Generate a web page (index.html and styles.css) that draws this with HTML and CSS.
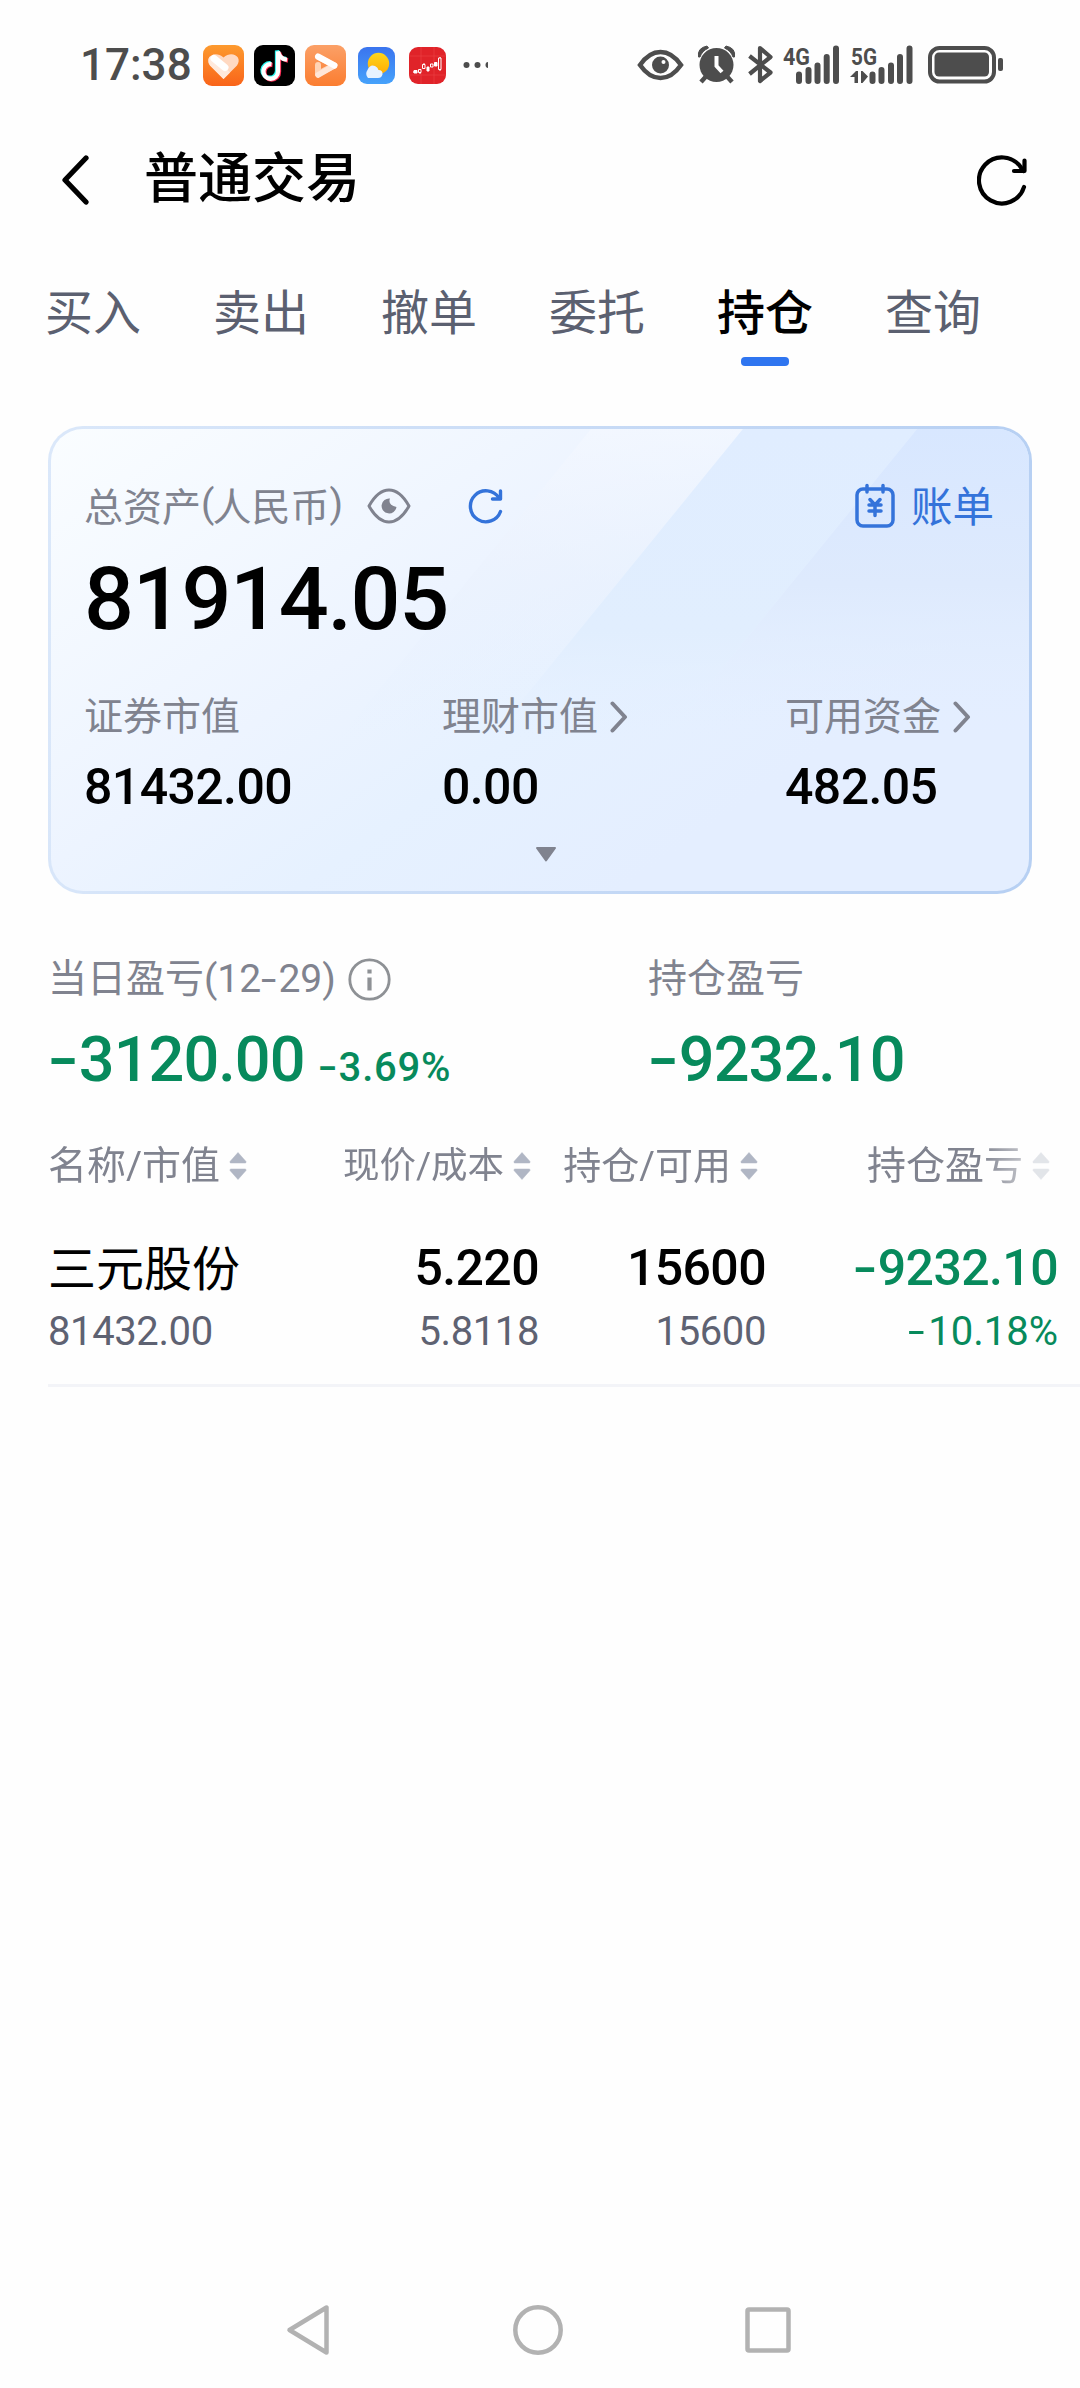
FILE: index.html
```html
<!DOCTYPE html>
<html lang="zh-CN">
<head>
<meta charset="utf-8">
<title>普通交易</title>
<link rel="stylesheet" href="styles.css">
</head>
<body>
<svg width="0" height="0" class="defs">
  <defs>
    <symbol id="sort" viewBox="0 0 18 30"><path d="M9 1.500 17 10.500Q17.500 12 16 12H2Q.500 12 1 10.500ZM9 28.500 17 19.500Q17.500 18 16 18H2Q.500 18 1 19.500Z" fill="#b0b6c4" stroke="#b0b6c4" stroke-width=".5"/></symbol>
    <symbol id="more" viewBox="0 0 18 32"><path d="M2.500 2.500 15 16 2.500 29.500" fill="none" stroke="#80838f" stroke-width="4" stroke-linecap="round" stroke-linejoin="round"/></symbol>
  </defs>
</svg>

<div class="status">
  <span class="time">17:38</span>
  <div class="apps">
    <svg width="41" height="41" viewBox="0 0 41 41"><defs><linearGradient id="g1" x2="0" y2="1"><stop stop-color="#fd9a2e"/><stop offset="1" stop-color="#f9641a"/></linearGradient></defs><rect width="41" height="41" rx="9" fill="url(#g1)"/><path d="M20.500 34 7 20.500C1 12 12 5 20.500 12.500C29 5 40 12 34 20.500Z" fill="#ffd9c2"/><path d="M20.500 34 27 27.500 12 12.500Q7 9 5.500 14Q5 18 7 20.500Z" fill="#ffe9dc"/><path d="M11 13.500 22 22.500" stroke="#fff" stroke-width="7" stroke-linecap="round"/></svg>
    <svg width="41" height="41" viewBox="0 0 41 41"><rect width="41" height="41" rx="9"/><g fill="none" stroke-width="4.300"><path d="M16.500 18.200A7.300 7.300 0 1 0 23 26V5.500Q24.500 13.500 32 14" stroke="#25f4ee"/><path d="M18.500 20A7.300 7.300 0 1 0 25 27V7.500Q27 14.500 34 15.500" stroke="#fe2c55"/><path d="M17.500 19.200A7.300 7.300 0 1 0 24 26.500V6.500Q25.700 14 33 14.700" stroke="#fff"/></g></svg>
    <svg width="41" height="41" viewBox="0 0 41 41"><defs><linearGradient id="g2" x2="0" y2="1"><stop stop-color="#fba067"/><stop offset="1" stop-color="#fb7d30"/></linearGradient></defs><rect width="41" height="41" rx="9" fill="url(#g2)"/><g fill="none" stroke-linecap="round" stroke-linejoin="round"><path d="M13 20V29L29 20.500" stroke="#ffd3b5" stroke-width="6"/><path d="M13 12 29.500 20.500 13 30" stroke="#ffe6d8" stroke-width="5.500"/><path d="M13 11.500 29.500 20.500" stroke="#fff" stroke-width="6"/></g></svg>
    <svg class="small first" width="37" height="37" viewBox="0 0 37 37"><defs><linearGradient id="g3" x2="0" y2="1"><stop stop-color="#3a74ee"/><stop offset="1" stop-color="#46a2fb"/></linearGradient><linearGradient id="g4" x2="0" y2="1"><stop stop-color="#fdd61a"/><stop offset="1" stop-color="#ffac04"/></linearGradient></defs><rect width="37" height="37" rx="9" fill="url(#g3)"/><circle cx="20.500" cy="16.500" r="10.700" fill="url(#g4)"/><path d="M10 31a6 6 0 0 1-.5-8Q12 17 17 19q3 1.500 3.500 4Q25 23 24.500 27.500Q23.500 31 20 31Z" fill="#e6f2ff"/></svg>
    <svg class="small" width="37" height="37" viewBox="0 0 37 37"><rect width="37" height="37" rx="9" fill="#e02329"/><path d="M0 9H37M0 28H37M12 0V37M25 0V37" stroke="#ec4548" stroke-width=".6"/><g stroke="#fff" fill="none"><path d="M4 25H7M11 22V27M15 16V21M23 17V20M31 10V24"/><path d="M5 23.500H8V26H5ZM25.500 15.500H28V19H25.500ZM18 20H20V24H18Z" fill="#fff"/><path d="M9.500 22.500H12V25.500H9.500ZM13.500 17.500H16V21.500H13.500ZM21.500 17H24V20H21.500ZM29.500 11H32V22.500H29.500Z" fill="#e02329"/></g></svg>
    <svg class="dots" width="25" height="8" viewBox="0 0 25 8" fill="#4d4d4d"><circle cx="3.500" cy="4" r="3"/><circle cx="14.500" cy="4" r="3"/><circle cx="25.500" cy="4" r="3"/></svg>
  </div>
  <svg class="signals" width="370" height="44" viewBox="636 43 370 44" fill="#4d4d4d">
    <g fill="none" stroke="#4d4d4d"><path d="M640 65Q649 52 660.500 52T681 65Q672 78 660.500 78T640 65Z" stroke-width="4.500"/></g>
    <circle cx="660.500" cy="65" r="8.500"/><circle cx="663.500" cy="62" r="2" fill="#fff"/>
    <circle cx="716.500" cy="65" r="17"/><path d="M716.500 56V66L722 72" fill="none" stroke="#fff" stroke-width="4"/><path d="M705.500 77 701 82M727.500 77 732 82" stroke="#4d4d4d" stroke-width="4.500"/><path d="M698.500 57Q697 48 707 46L708.500 48Q702 51 700 57ZM734.500 57Q736 48 726 46L724.500 48Q731 51 733 57Z" stroke="#4d4d4d"/>
    <path d="M749.500 56 770.500 72.500 760 81V48L770.500 57 749.500 74" fill="none" stroke="#4d4d4d" stroke-width="4.200" stroke-linejoin="round"/>
    <path d="M799 74.500V81M808.500 70V81M817.500 65.500V81M826.700 57V81M836 48.500V81" stroke="#4d4d4d" stroke-width="6" stroke-linecap="round"/>
    <path d="M872.500 74.500V81M881.500 70V81M891 65.500V81M900 57V81M909.500 48.500V81" stroke="#4d4d4d" stroke-width="6" stroke-linecap="round"/>
    <path d="M850 77 856 71H858V83H854.500V77ZM861 71H862.500L868 76.500 862.500 83H861Z"/>
    <text x="783" y="64.500" textLength="27" lengthAdjust="spacingAndGlyphs" class="net">4G</text>
    <text x="851" y="64.500" textLength="26" lengthAdjust="spacingAndGlyphs" class="net">5G</text>
    <rect x="930" y="48" width="64" height="33.500" rx="9.500" fill="none" stroke="#4d4d4d" stroke-width="4"/><rect x="934.500" y="52.500" width="54.500" height="24" rx="4.500"/><rect x="998" y="58" width="5" height="13" rx="2"/>
  </svg>
</div>

<header class="header">
  <svg width="30" height="50" viewBox="0 0 30 50"><path d="M26 3 5 25 26 47" fill="none" stroke="#000" stroke-width="5.200" stroke-linecap="round" stroke-linejoin="round"/></svg>
  <h1>普通交易</h1>
  <svg class="reload" width="50" height="52" viewBox="0 0 50 52" fill="none" stroke="#000" stroke-width="4.200" stroke-linecap="round" stroke-linejoin="round"><path d="M47 33A23 23 0 1 1 44 13.500L46.500 17"/><path d="M47.500 6.500V17H37"/></svg>
</header>

<nav class="tabs">
  <a>买入</a><a>卖出</a><a>撤单</a><a>委托</a><a class="active">持仓</a><a>查询</a>
</nav>

<section class="card">
  <svg class="stripes" width="978" height="462" viewBox="51 429 978 462">
    <defs>
      <linearGradient id="s1" x2="0" y2="1"><stop stop-color="#f4f8ff" stop-opacity=".7"/><stop offset=".5" stop-color="#eaf1fd" stop-opacity=".5"/><stop offset="1" stop-color="#e4f0ff" stop-opacity="0"/></linearGradient>
      <linearGradient id="s2" x2="0" y2="1"><stop stop-color="#e0edff"/><stop offset=".65" stop-color="#e1eefe"/><stop offset="1" stop-color="#e4efff" stop-opacity="0"/></linearGradient>
      <linearGradient id="s3" x2="0" y2="1"><stop stop-color="#d8e7ff"/><stop offset=".5" stop-color="#deeafd"/><stop offset="1" stop-color="#e4efff" stop-opacity="0"/></linearGradient>
    </defs>
    <path d="M591 429H743L490 740H338Z" fill="url(#s1)"/>
    <path d="M743 429H917L664 740H490Z" fill="url(#s2)"/>
    <path d="M917 429H1029V740H664Z" fill="url(#s3)"/>
  </svg>
  <div class="card-head">
    <span class="label">总资产<i class="paren">(</i>人民币<i class="paren">)</i></span>
    <svg class="eye" width="44" height="36" viewBox="0 0 44 36"><path d="M2 18Q11 2 22 2T42 18Q33 34 22 34T2 18Z" fill="none" stroke="#80838f" stroke-width="3" stroke-linejoin="round"/><path d="M23 10.500Q20.500 17 29.500 19A7.500 7.500 0 1 1 23 10.500Z" fill="#80838f"/></svg>
    <svg class="mini" width="35" height="36" viewBox="0 0 35 36" fill="none" stroke="#3473da" stroke-width="3.400" stroke-linecap="round" stroke-linejoin="round"><path d="M32.500 23.500A15.500 15.500 0 1 1 31 10"/><path d="M32.500 3V11H24.500"/></svg>
    <a class="bill"><svg width="40" height="46" viewBox="0 0 40 46" fill="none" stroke="#3473da" stroke-width="3.500" stroke-linecap="round"><rect x="2" y="6" width="36" height="37" rx="6"/><path d="M12 2.500V9M28 2.500V9"/><path d="M15 16.500 20 22 25 16.500M14 22H26M14 28H26M20 22V32.500"/></svg><span>账单</span></a>
  </div>
  <div class="total">81914.05</div>
  <div class="assets">
    <div><span class="label">证券市值</span><b>81432.00</b></div>
    <div><span class="label">理财市值<svg width="18" height="32"><use href="#more"/></svg></span><b>0.00</b></div>
    <div><span class="label">可用资金<svg width="18" height="32"><use href="#more"/></svg></span><b>482.05</b></div>
  </div>
  <svg class="expand" width="22" height="15" viewBox="0 0 22 15"><path d="M2 1H20L11 13.500Z" fill="#80838f" stroke="#80838f" stroke-width="2" stroke-linejoin="round"/></svg>
</section>

<section class="pnl">
  <div>
    <div class="label"><span>当日盈亏(12<i class="dash">-</i>29)</span><svg width="43" height="43" viewBox="0 0 43 43"><circle cx="21.500" cy="21.500" r="19.700" fill="none" stroke="#8e9195" stroke-width="2.800"/><path d="M21.500 11.500V15.500M21.500 19.500V32.500" stroke="#8e9195" stroke-width="4.200"/></svg></div>
    <div class="amount"><span><i class="dash">-</i>3120.00</span><small><i class="dash">-</i>3.69%</small></div>
  </div>
  <div>
    <div class="label"><span>持仓盈亏</span></div>
    <div class="amount"><span><i class="dash">-</i>9232.10</span></div>
  </div>
</section>

<section class="table">
  <div class="grid head">
    <span>名称/市值<svg width="18" height="30"><use href="#sort"/></svg></span>
    <span class="h2">现价/成本<svg width="18" height="30"><use href="#sort"/></svg></span>
    <span class="h3">持仓/可用<svg width="18" height="30"><use href="#sort"/></svg></span>
    <span>持仓盈亏<svg width="18" height="30"><use href="#sort"/></svg></span>
  </div>
  <div class="grid row">
    <div><b class="name">三元股份</b><span>81432.00</span></div>
    <div><b>5.220</b><span>5.8118</span></div>
    <div><b>15600</b><span>15600</span></div>
    <div class="down"><b><i class="dash">-</i>9232.10</b><span><i class="dash">-</i>10.18%</span></div>
  </div>
</section>

<footer class="sysnav">
  <svg width="44" height="52" viewBox="0 0 44 52"><path d="M40.500 3.500V48.500L3.500 26Z"/></svg>
  <svg width="50" height="52" viewBox="0 0 50 52"><circle cx="25" cy="26" r="22.700"/></svg>
  <svg width="46" height="46" viewBox="0 0 46 46"><rect x="2.500" y="2.500" width="41" height="41" rx="1.500"/></svg>
</footer>
</body>
</html>
```
FILE: styles.css
```css
* { box-sizing: border-box; }
body {
  margin: 0;
  width: 1080px;
  height: 2388px;
  overflow: hidden;
  display: flex;
  flex-direction: column;
  background: #fefefe;
  color: #000;
  font-family: Roboto, "Noto Sans CJK SC", sans-serif;
}
svg { display: block; flex: none; }
.defs { position: absolute; }
b { font-weight: 500; letter-spacing: -.012em; }
i { font-style: normal; }
.dash { display: inline-block; line-height: 1; margin-right: .165em; transform: translateY(-.01em) scaleX(1.42); transform-origin: left; }
.paren { letter-spacing: -.05em; }

.status {
  height: 130px;
  padding: 0 74px 0 80px;
  display: flex;
  align-items: center;
  flex: none;
}
.time { width: 123px; font-size: 44px; font-weight: 500; color: #4d4d4d; }
.apps { display: flex; align-items: center; gap: 10px; }
.apps .small { margin-right: 4px; }
.apps .first { margin-left: 2px; }
.apps .dots { margin-left: 3px; }
.signals { margin-left: auto; }
.net { font-size: 24px; font-weight: 700; }

.header { height: 100px; padding: 0 53px 0 60px; display: flex; align-items: center; flex: none; }
.header h1 { margin: 0 0 0 54px; font-size: 54px; line-height: 80px; font-weight: 500; }
.reload { margin-left: auto; }

.tabs { margin: 54px 0 0 45px; display: flex; gap: 72px; font-size: 48px; line-height: 60px; color: #5b6070; }
.tabs a { display: flex; flex-direction: column; align-items: center; }
.tabs a::after { content: ""; width: 48px; height: 9px; margin-top: 13px; border-radius: 4px; }
.tabs .active { color: #000; font-weight: 500; }
.tabs .active::after { background: #2f75f0; }

.card {
  position: relative;
  height: 468px;
  margin: 60px 48px 0;
  padding: 45px 35px 0 33px;
  flex: none;
  overflow: hidden;
  border: 3px solid transparent;
  border-radius: 35px;
  background:
    linear-gradient(145deg, #fafdff 0%, #edf4ff 38%, #e6f1ff 55%, #e4eeff 75%) padding-box,
    linear-gradient(100deg, #dbe8fa 0%, #c8dbf6 50%, #b7d0f3 90%) border-box;
}
.stripes { position: absolute; left: 0; top: 0; }
.card > :not(.stripes) { position: relative; }
.label { font-size: 39px; color: #80838f; display: flex; align-items: center; white-space: nowrap; }
.card-head { height: 60px; display: flex; align-items: center; }
.card-head svg { margin-top: 3px; }
.card-head .eye { margin-left: 26px; }
.card-head .mini { margin-left: 57px; }
.bill { margin-left: auto; display: flex; align-items: center; gap: 16px; font-size: 41.500px; color: #3473da; }
.total { margin-top: 20px; font-size: 88px; line-height: 90px; font-weight: 500; letter-spacing: -.015em; }
.assets { margin-top: 48px; display: grid; grid-template-columns: 358px 343px 1fr; }
.assets .label { line-height: 50px; }
.assets .label svg { margin-left: 12px; }
.assets b { display: block; margin-top: 15px; font-size: 50px; line-height: 60px; }
.expand { margin: 30px auto 0 451px; }

.pnl { margin: 55px 0 0 48px; display: grid; grid-template-columns: 600px 1fr; }
.pnl .label { height: 60px; line-height: 50px; }
.pnl .label svg { margin-left: 12px; }
.amount { margin-top: 11px; height: 80px; display: flex; align-items: baseline; font-size: 63px; line-height: 80px; font-weight: 500; letter-spacing: -.015em; color: #078a5c; white-space: nowrap; }
.amount small { margin-left: 13px; font-size: 40px; letter-spacing: .02em; }

.table { margin-top: 41px; }
.grid { display: grid; grid-template-columns: 250px 241px 227px 292px; padding-left: 48px; }
.head { height: 50px; font-size: 39px; line-height: 46px; color: #80838f; -webkit-mask-image: linear-gradient(90deg, #000 980px, rgba(0,0,0,.35) 1035px); mask-image: linear-gradient(90deg, #000 980px, rgba(0,0,0,.35) 1035px); }
.head > span { display: flex; align-items: center; justify-content: flex-end; padding-right: 8px; white-space: nowrap; }
.head > span:first-child { justify-content: flex-start; }
.head svg { margin-left: 9px; }
.head .h2 { font-size: 36.500px; }
.head .h3 { font-size: 38px; }
.row { margin: 47px 0 0 48px; padding: 0 0 28px; border-bottom: 3px solid #f3f4f8; }
.row > div { text-align: right; white-space: nowrap; }
.row > div:first-child { text-align: left; }
.row b { display: block; height: 60px; font-size: 50px; line-height: 61px; }
.row .name { font-size: 48px; font-weight: 400; line-height: 63px; letter-spacing: 0; }
.row span { display: block; height: 50px; margin-top: 8px; font-size: 40px; line-height: 51px; letter-spacing: -.01em; color: #5e6272; }
.row .down, .row .down span { color: #078a5c; }
.row .down span { letter-spacing: 0; }
.row .down span .dash { margin-right: .22em; transform: translateY(-.01em) scaleX(1.5); }
.grid.row { padding-left: 0; }

.sysnav { margin: auto 0 32px; padding: 0 289px 0 286px; height: 52px; display: flex; align-items: center; justify-content: space-between; }
.sysnav svg { fill: none; stroke: #b2b2b2; stroke-width: 4.500px; stroke-linejoin: round; }
```
